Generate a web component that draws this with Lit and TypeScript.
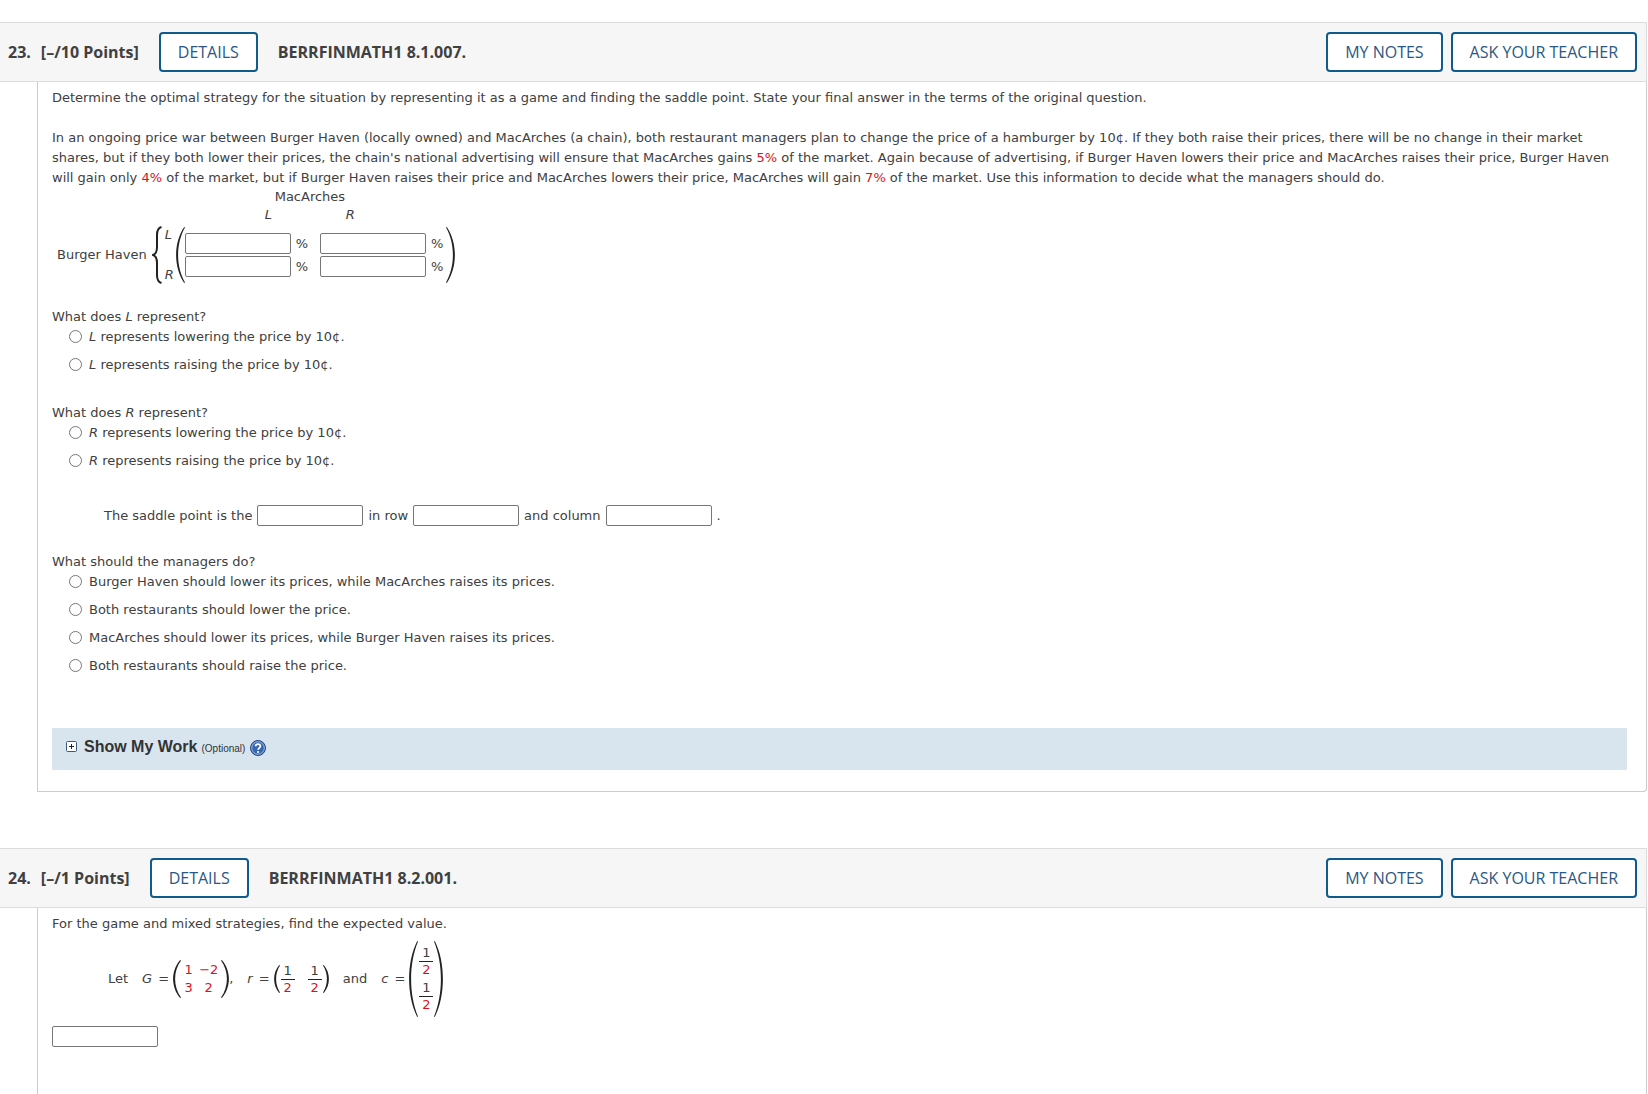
import { LitElement, html, svg, css } from "lit";
import { customElement, property } from "lit/decorators.js";

type Option = { text: unknown };

/* Stretchable round bracket: thick in the middle, thin at both tips. */
const paren = (side: "left" | "right", w: number, h: number) => {
  const outer = ((0.3 - w / 4) * 4) / 3;
  const inner = ((2.1 - w / 4) * 4) / 3;
  const d = `M${w - 0.8} 0 C${outer} ${h * 0.28} ${outer} ${h * 0.72} ${w - 0.8} ${h} L${w} ${h - 0.6} C${inner} ${h * 0.7} ${inner} ${h * 0.3} ${w} 0.6 Z`;
  return html`<svg class="bracket" width=${w} height=${h} viewBox="0 0 ${w} ${h}" aria-hidden="true">
    ${svg`<path d=${d} transform=${side === "right" ? `translate(${w} 0) scale(-1 1)` : ""}></path>`}
  </svg>`;
};

@customElement("question-card")
export class QuestionCard extends LitElement {
  @property() number = "";
  @property() points = "";
  @property() code = "";

  static styles = css`
    :host {
      display: flex;
      flex-direction: column;
      color: #404040;
    }
    .header {
      display: flex;
      align-items: center;
      box-sizing: border-box;
      min-height: 60px;
      padding: 0 9px 0 8px;
      background: #f6f6f6;
      border: 1px solid #dcdcdc;
      border-left: 0;
      font: 600 16px/24px "Open Sans", sans-serif;
    }
    .title {
      display: flex;
      margin: 0;
      font: inherit;
      font-weight: 700;
      gap: 10px;
    }
    .details {
      margin: 0 20px;
    }
    .actions {
      display: flex;
      gap: 8px;
      margin-left: auto;
    }
    button {
      box-sizing: border-box;
      height: 40px;
      padding: 0 17px;
      border: 2px solid #0f5b8c;
      border-radius: 4px;
      background: #fff;
      color: #2a5885;
      font: 400 16px/24px "Open Sans", sans-serif;
      white-space: nowrap;
    }
    .body {
      flex: 1;
      margin-left: 37px;
      padding: 6px 19px 21px 14px;
      border: 1px solid #ccc;
      border-top: 0;
      border-radius: 0 0 4px 0;
      font: 13px/20px Verdana, "DejaVu Sans", sans-serif;
    }
    :host(.last) .body {
      border-bottom: 0;
      border-radius: 0;
    }
  `;

  render() {
    return html`
      <header class="header">
        <h2 class="title"><span>${this.number}.</span><span>[–/${this.points} Points]</span></h2>
        <button class="details" type="button">DETAILS</button>
        <span class="title">${this.code}</span>
        <div class="actions">
          <button type="button">MY NOTES</button>
          <button type="button">ASK YOUR TEACHER</button>
        </div>
      </header>
      <div class="body"><slot></slot></div>
    `;
  }
}

@customElement("app-root")
export class AppRoot extends LitElement {
  static styles = css`
    :host {
      display: flex;
      flex-direction: column;
      gap: 56px;
      box-sizing: border-box;
      min-height: 100vh;
      padding: 22px 1px 0 0;
      background: #fff;
    }
    .last {
      flex: 1;
    }
    p {
      margin: 0;
    }
    .intro {
      margin-bottom: 20px;
    }
    .num {
      color: #d8121d;
    }
    input[type="text"] {
      box-sizing: border-box;
      width: 106px;
      height: 21px;
      padding: 1px 2px;
      border: 1px solid #767676;
      border-radius: 2px;
      background: #fff;
      font: 13px "Liberation Sans", sans-serif;
    }
    .bracket {
      display: block;
      flex: none;
      fill: #222;
    }
    .payoff {
      display: grid;
      grid-template-columns: max-content max-content;
      width: max-content;
      margin: 0 0 21px 5px;
      line-height: 18px;
    }
    .columns {
      grid-column: 2;
      display: grid;
      grid-template-columns: 81px 80px;
      padding-left: 118px;
    }
    .owner {
      grid-column: 1 / -1;
      padding-left: 10px;
    }
    .side {
      align-self: center;
    }
    .matrix {
      display: flex;
      align-items: center;
      height: 62px;
    }
    .brace {
      display: block;
      margin: 0 3px 0 5px;
      fill: none;
      stroke: #222;
      stroke-width: 2;
    }
    .rows {
      display: flex;
      flex-direction: column;
      justify-content: space-between;
      height: 58px;
      width: 11px;
    }
    .cells {
      display: grid;
      grid-template-columns: max-content max-content;
      gap: 2px 12px;
      margin-right: 3px;
    }
    .cell {
      display: flex;
      align-items: center;
      gap: 5px;
      height: 21px;
    }
    fieldset {
      min-width: 0;
      margin: 0 0 20px;
      padding: 0;
      border: 0;
    }
    legend {
      padding: 0;
    }
    .option {
      display: flex;
      align-items: center;
      gap: 7px;
      width: max-content;
      margin: 0 0 8px 17px;
    }
    .option input {
      width: 13px;
      height: 13px;
      margin: 0 0 2px;
    }
    .saddle {
      display: flex;
      align-items: center;
      gap: 5px;
      margin: 26px 0 26px 52px;
    }
    .decision {
      margin-bottom: 44px;
    }
    .work {
      display: flex;
      align-items: center;
      box-sizing: border-box;
      min-height: 42px;
      padding: 0 14px 2px;
      background: #d8e5ee;
      border-radius: 1px;
    }
    .toggle {
      display: flex;
      align-items: baseline;
      gap: 4px;
      padding: 0;
      border: 0;
      background: none;
      color: #333;
      font: bold 16px/20px "Liberation Sans", Arial, sans-serif;
    }
    .plus {
      margin-right: 3px;
    }
    .optional {
      font-size: 10px;
      font-weight: 400;
    }
    .help {
      display: flex;
      margin-left: 5px;
    }
    .math {
      display: flex;
      align-items: center;
      height: 76px;
      margin: 7px 0 9px 56px;
    }
    .group {
      display: flex;
      align-items: center;
      gap: 2px;
    }
    .var {
      margin-right: 4px;
    }
    .g {
      display: grid;
      grid-template-columns: 15px 25px;
      line-height: 18px;
      text-align: center;
    }
    .fractions {
      display: flex;
      gap: 13px;
      margin: 0 1px;
    }
    .stack {
      flex-direction: column;
      gap: 2px;
    }
    .fraction {
      display: flex;
      flex-direction: column;
      width: 14px;
      line-height: 16px;
      text-align: center;
    }
    .fraction .num {
      border-top: 1px solid #222;
    }
    .space {
      margin-left: 14px;
    }
  `;

  private cell(label: string) {
    return html`<label class="cell"><input type="text" aria-label=${label} />%</label>`;
  }

  private options(name: string, list: Option[]) {
    return list.map(
      (o) => html`<label class="option"><input type="radio" name=${name} /><span>${o.text}</span></label>`
    );
  }

  private half() {
    return html`<span class="fraction"><span>1</span><span class="num">2</span></span>`;
  }

  render() {
    return html`
      <question-card number="23" points="10" code="BERRFINMATH1 8.1.007.">
        <p class="intro">
          Determine the optimal strategy for the situation by representing it as a game and finding the saddle point.
          State your final answer in the terms of the original question.
        </p>
        <p>
          In an ongoing price war between Burger Haven (locally owned) and MacArches (a chain), both restaurant managers
          plan to change the price of a hamburger by 10¢. If they both raise their prices, there will be no change in
          their market shares, but if they both lower their prices, the chain's national advertising will ensure that
          MacArches gains <span class="num">5%</span> of the market. Again because of advertising, if Burger Haven
          lowers their price and MacArches raises their price, Burger Haven will gain only
          <span class="num">4%</span> of the market, but if Burger Haven raises their price and MacArches lowers their
          price, MacArches will gain <span class="num">7%</span> of the market. Use this information to decide what the
          managers should do.
        </p>
        <div class="payoff">
          <div class="columns"><span class="owner">MacArches</span><i>L</i><i>R</i></div>
          <span class="side">Burger Haven</span>
          <div class="matrix">
            <svg class="brace" width="10" height="58" viewBox="0 0 10 58" aria-hidden="true">
              <path d="M9.500 1 C5.500 2 5 5 5 9 V21 C5 25.500 4 28 1 29 C4 30 5 32.500 5 37 V49 C5 53 5.500 56 9.500 57"></path>
            </svg>
            <div class="rows"><i>L</i><i>R</i></div>
            ${paren("left", 9, 56)}
            <div class="cells">
              ${this.cell("Row L, column L")} ${this.cell("Row L, column R")} ${this.cell("Row R, column L")}
              ${this.cell("Row R, column R")}
            </div>
            ${paren("right", 9, 56)}
          </div>
        </div>

        <fieldset>
          <legend>What does <i>L</i> represent?</legend>
          ${this.options("l", [
            { text: html`<i>L</i> represents lowering the price by 10¢.` },
            { text: html`<i>L</i> represents raising the price by 10¢.` },
          ])}
        </fieldset>
        <fieldset>
          <legend>What does <i>R</i> represent?</legend>
          ${this.options("r", [
            { text: html`<i>R</i> represents lowering the price by 10¢.` },
            { text: html`<i>R</i> represents raising the price by 10¢.` },
          ])}
        </fieldset>

        <div class="saddle">
          <label for="saddle">The saddle point is the</label><input id="saddle" type="text" />
          <label for="row">in row</label><input id="row" type="text" /> <label for="column">and column</label
          ><input id="column" type="text" /> .
        </div>

        <fieldset class="decision">
          <legend>What should the managers do?</legend>
          ${this.options("decision", [
            { text: "Burger Haven should lower its prices, while MacArches raises its prices." },
            { text: "Both restaurants should lower the price." },
            { text: "MacArches should lower its prices, while Burger Haven raises its prices." },
            { text: "Both restaurants should raise the price." },
          ])}
        </fieldset>

        <div class="work">
          <button class="toggle" type="button">
            <svg class="plus" width="11" height="11" viewBox="0 0 11 11" aria-hidden="true">
              <rect x=".5" y=".5" width="10" height="10" rx="1" fill="#fff" stroke="#3c5a78"></rect>
              <path d="M3 5.500h5M5.500 3v5" stroke="#222"></path>
            </svg>
            <span>Show My Work</span><span class="optional">(Optional)</span>
          </button>
          <a class="help" href="#help" aria-label="Help">
            <svg width="16" height="16" viewBox="0 0 16 16" aria-hidden="true">
              <circle cx="8" cy="8" r="7.500" fill="#3567b0" stroke="#24477f"></circle>
              <circle cx="8" cy="8" r="6.300" fill="none" stroke="#b9cdea" stroke-width=".8"></circle>
              <path d="M5.600 6.300C5.700 3.300 10.500 3.300 10.400 6.200C10.300 7.800 8.200 7.900 8.100 9.700" fill="none" stroke="#fff" stroke-width="1.800"></path>
              <circle cx="8.100" cy="12" r="1.100" fill="#fff"></circle>
            </svg>
          </a>
        </div>
      </question-card>

      <question-card class="last" number="24" points="1" code="BERRFINMATH1 8.2.001.">
        <p>For the game and mixed strategies, find the expected value.</p>
        <div class="math">
          <span>Let</span>
          <span class="group space"><i>G</i><span class="var">&nbsp;=</span></span>
          ${paren("left", 8, 38)}
          <span class="g num"><span>1</span><span>−2</span><span>3</span><span>2</span></span>
          ${paren("right", 8, 38)}<span>,</span>
          <span class="group space"><i>r</i><span class="var">&nbsp;=</span></span>
          ${paren("left", 6, 28)}
          <span class="fractions">${this.half()}${this.half()}</span>
          ${paren("right", 6, 28)}
          <span class="space">and</span>
          <span class="group space"><i>c</i><span class="var">&nbsp;=</span></span>
          ${paren("left", 9, 76)}
          <span class="fractions stack">${this.half()}${this.half()}</span>
          ${paren("right", 9, 76)}
        </div>
        <input type="text" aria-label="Expected value" />
      </question-card>
    `;
  }
}
